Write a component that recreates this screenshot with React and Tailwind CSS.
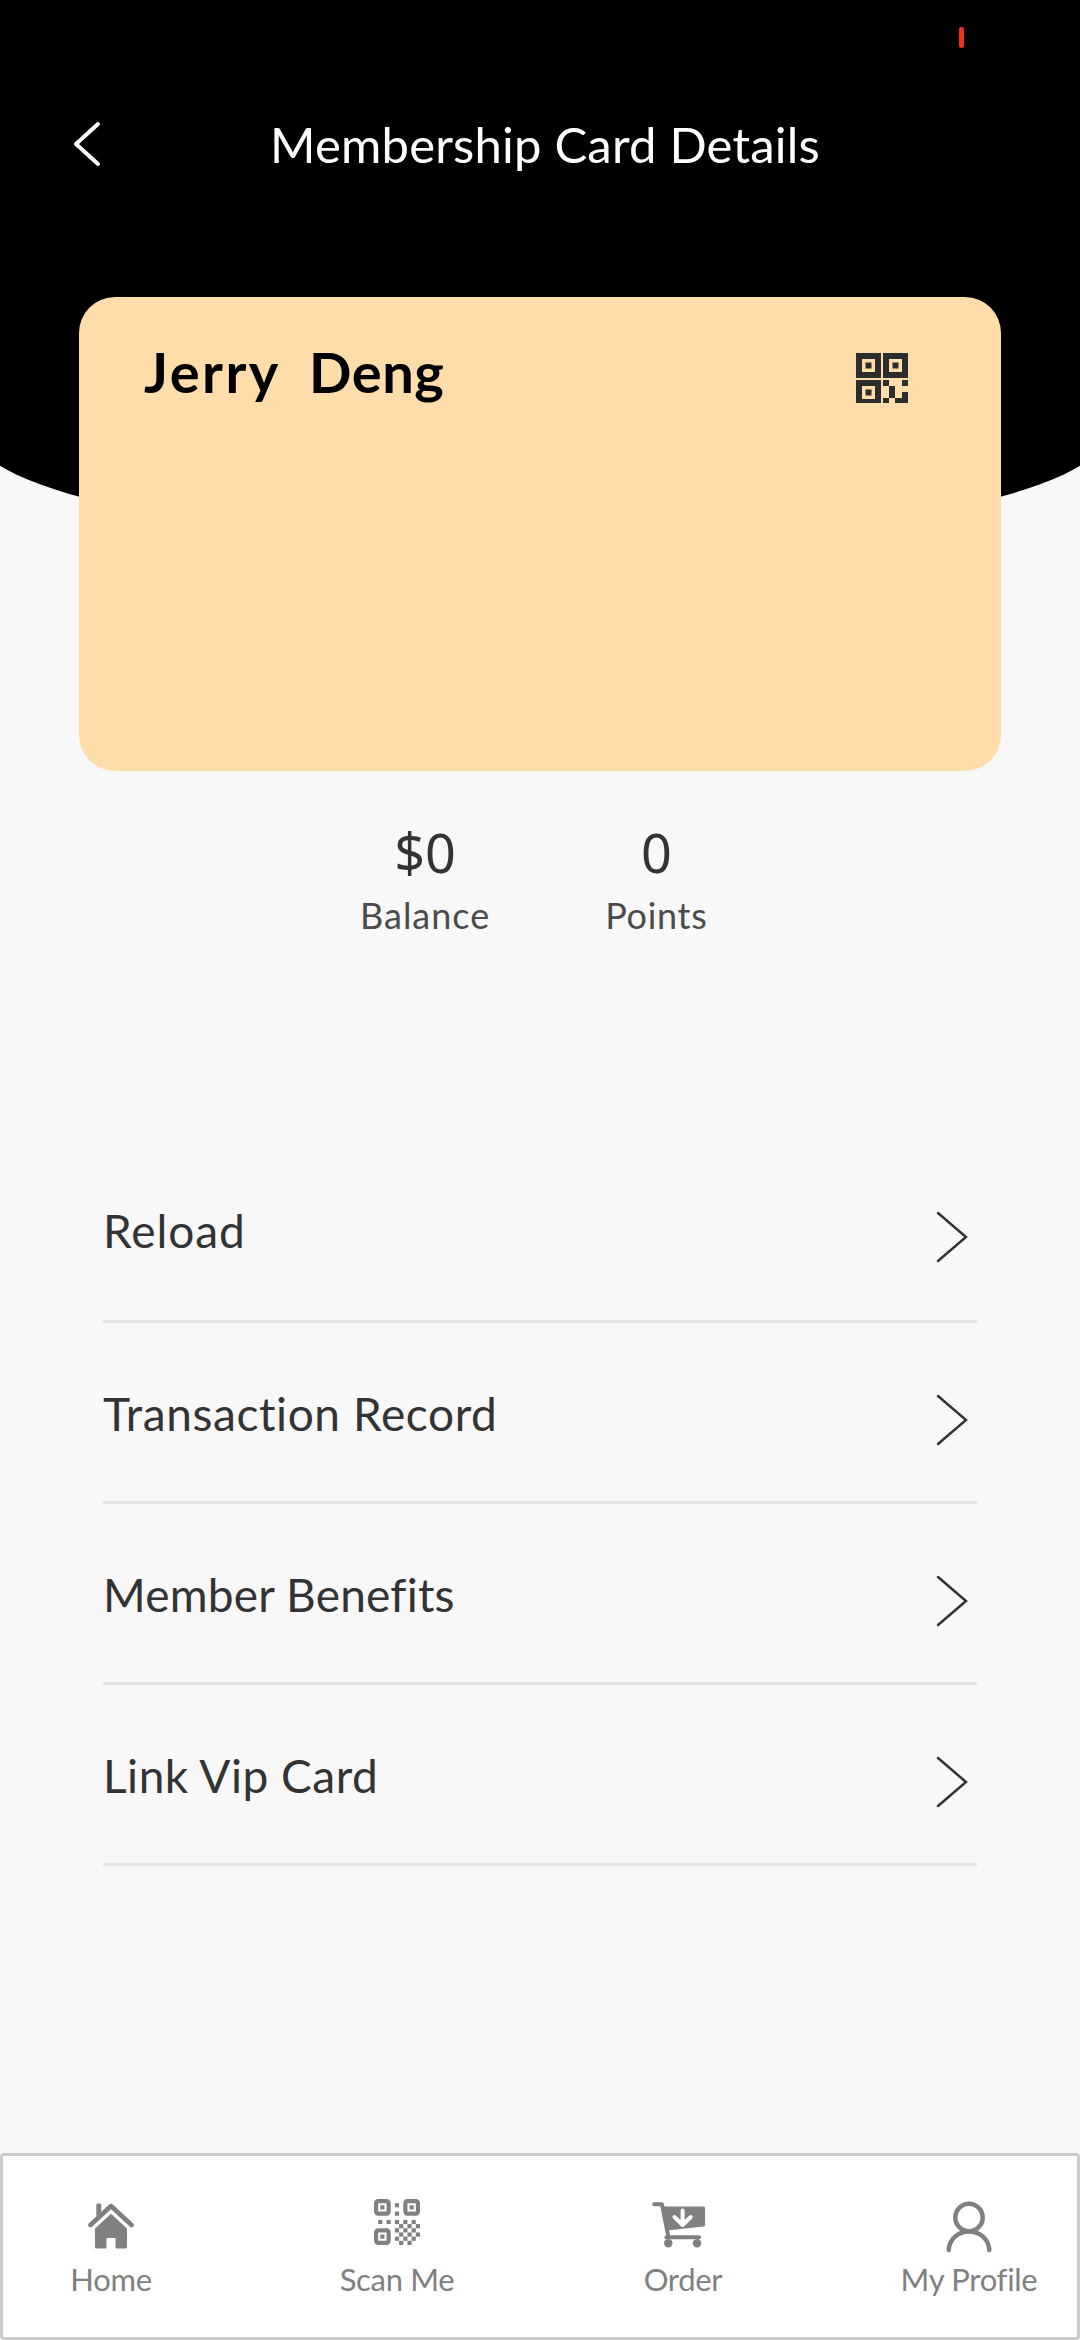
import clsx from "clsx";

const menu = [
  { label: "Reload", track: "tracking-[0.9px]", pad: "pt-0" },
  { label: "Transaction Record", track: "tracking-[0.6px]", pad: "pt-1" },
  { label: "Member Benefits", track: "tracking-[0.2px]", pad: "pt-1" },
  { label: "Link Vip Card", track: "tracking-[0.5px]", pad: "pt-1" }
];

const stats = [
  { value: "$0", label: "Balance", track: "tracking-[1px]" },
  { value: "0", label: "Points", track: "tracking-[0.7px]" }
];

// [col, row] of the single cells in the 11x11 scan icon
const cells = [
  [5, 1], [5, 3], [1, 5], [3, 5], [5, 5], [7, 5], [9, 5],
  [6, 6], [8, 6], [10, 6], [5, 7], [7, 7], [9, 7],
  [6, 8], [8, 8], [10, 8], [5, 9], [7, 9], [9, 9], [6, 10], [8, 10]
];

function HomeIcon() {
  return (
    <svg viewBox="0 0 46 46" className="h-[46px] w-[46px]" fill="none" stroke="currentColor" aria-hidden="true">
      <path d="M2.500 22 23 3l20.500 19" strokeWidth="4.600" strokeLinecap="round" strokeLinejoin="round" />
      <path d="M8.300 2a1.500 1.500 0 0 1 1.500-1.500h2A1.500 1.500 0 0 1 13.300 2v7l-5 4.500Z" fill="currentColor" stroke="none" />
      <path d="M23 10.800 39 25.500V44a1.500 1.500 0 0 1-1.500 1.500H28.500A1 1 0 0 1 27.500 44.500V35h-9v9.500a1 1 0 0 1-1 1H8.500A1.500 1.500 0 0 1 7 44V25.500Z" fill="currentColor" stroke="none" />
    </svg>
  );
}

function ScanIcon() {
  return (
    <svg viewBox="0 0 11 11" className="h-[46px] w-[46px]" fill="currentColor" aria-hidden="true">
      {[[0, 0], [7, 0], [0, 7]].map(([x, y]) => (
        <g key={`${x}-${y}`}>
          <rect x={x + 0.5} y={y + 0.5} width="3" height="3" rx="0.5" fill="none" stroke="currentColor" />
          <rect x={x + 1.5} y={y + 1.5} width="1" height="1" />
        </g>
      ))}
      {cells.map(([x, y]) => (
        <rect key={`${x}-${y}`} x={x} y={y} width="1" height="1" />
      ))}
    </svg>
  );
}

function OrderIcon() {
  return (
    <svg viewBox="0 0 54 46" className="mr-2 h-[46px] w-[54px]" fill="none" stroke="currentColor" strokeLinecap="round" strokeLinejoin="round" aria-hidden="true">
      <path d="M2.200 2.300H10l6 30.500" strokeWidth="4" />
      <path d="M11 4.500H51.500A1.500 1.500 0 0 1 53 6V23a1.500 1.500 0 0 1-1.500 1.500L15.500 28.500Z" fill="currentColor" stroke="none" />
      <path d="M14.500 35.300H47" strokeWidth="4" />
      <circle cx="16.300" cy="41.300" r="4.200" fill="currentColor" stroke="none" />
      <circle cx="45" cy="41.300" r="4.200" fill="currentColor" stroke="none" />
      <path d="M30.600 8.500V22M22.500 15l8.100 8 8.100-8" stroke="white" strokeWidth="4" />
    </svg>
  );
}

function ProfileIcon() {
  return (
    <svg viewBox="0 0 46 52" className="h-[52px] w-[46px]" fill="none" stroke="currentColor" strokeWidth="4.500" strokeLinecap="round" aria-hidden="true">
      <circle cx="23" cy="16.500" r="13.700" />
      <path d="M2.700 49C3.500 38 12 30.500 23 30.500S42.500 38 43.300 49" />
    </svg>
  );
}

function CardQr() {
  return (
    <svg viewBox="0 0 52 50" className="h-[50px] w-[52px]" fill="#2d2d2b" aria-hidden="true">
      {[[0, 0], [27, 0], [0, 27]].map(([x, y]) => (
        <g key={`${x}-${y}`}>
          <rect x={x + 3} y={y + 3} width="19" height="19" fill="none" stroke="#2d2d2b" strokeWidth="6" />
          <rect x={x + 9.5} y={y + 9.5} width="6" height="6" />
        </g>
      ))}
      <path d="M27 27h6v6h-6ZM33 33h6v12h-6ZM27 45h6v5h-6ZM46 27h6v6h-6ZM46 39h6v11H39v-5h7Z" />
    </svg>
  );
}

const tabs = [
  { label: "Home", icon: HomeIcon, box: "pb-px" },
  { label: "Scan Me", icon: ScanIcon, box: "pb-[9px]" },
  { label: "Order", icon: OrderIcon, box: "pb-1" },
  { label: "My Profile", icon: ProfileIcon, box: "pt-0" }
];

export default function App() {
  return (
    <div className="relative flex h-[2340px] w-[1080px] flex-col overflow-hidden bg-[#f8f8f8] font-['Lato',sans-serif] text-[#333]">
      <div className="absolute top-0 -left-[27px] h-[543px] w-[1134px] rounded-b-[50%_111px] bg-black" />
      <div className="absolute top-[27px] left-[959px] h-[21px] w-[5px] rounded-full bg-[#f03022]" />

      <header className="relative flex h-[297px] items-start pt-[111px] text-white">
        <svg viewBox="0 0 30 48" className="mt-[9px] ml-[72px] h-12 w-[30px]" fill="none" stroke="currentColor" strokeWidth="4" strokeLinecap="round" strokeLinejoin="round" aria-label="Back">
          <path d="M26 4 4 24l22 20" />
        </svg>
        <h1 className="ml-[168px] text-[49px] leading-[66px] tracking-[0.2px] whitespace-nowrap">Membership Card Details</h1>
      </header>

      <section className="relative mx-[79px] flex h-[474px] shrink-0 justify-between rounded-[36px] bg-[#ffddaa] pt-[43px] pr-[93px] pl-[65px]">
        <h2 className="text-[56px] leading-[64px] font-bold whitespace-pre text-black">
          <span className="tracking-[2.500px]">Jerry</span>
          <span className="tracking-[0.5px]">{"  Deng"}</span>
        </h2>
        <div className="mt-[13px]"><CardQr /></div>
      </section>

      <section className="mt-[49px] ml-[360px] flex gap-[115px] text-center">
        {stats.map(({ value, label, track }) => (
          <div key={label}>
            <p className="font-['Noto_Sans',sans-serif] text-[54px] leading-[64px]">{value}</p>
            <p className={clsx("mt-px text-[36px] leading-[60px] text-[#4b4b4b]", track)}>{label}</p>
          </div>
        ))}
      </section>

      <ul className="mt-[197px] mr-[103px] ml-[103px]">
        {menu.map(({ label, track, pad }) => (
          <li key={label} className={clsx("flex h-[181px] items-center justify-between border-b-[3px] border-[#e5e5e5]", pad)}>
            <span className={clsx("text-[46px] leading-[60px]", track)}>{label}</span>
            <svg viewBox="0 0 32 52" className="mt-[11px] mr-[9px] h-[52px] w-8" fill="none" stroke="#333" strokeWidth="2.500" strokeLinecap="round" aria-hidden="true">
              <path d="M2 2 30 26 2 50" />
            </svg>
          </li>
        ))}
      </ul>

      <nav className="mt-auto flex h-[187px] justify-between rounded-[4px] border-[3px] border-[#ccc] bg-white px-[33px] text-[#808080]">
        {tabs.map(({ label, icon: Icon, box }) => (
          <div key={label} className="flex w-[150px] flex-col items-center pt-10">
            <div className={clsx("flex h-[61px] items-center", box)}><Icon /></div>
            <span className="text-[31px] leading-[44px] tracking-[-0.3px] whitespace-nowrap">{label}</span>
          </div>
        ))}
      </nav>
    </div>
  );
}
